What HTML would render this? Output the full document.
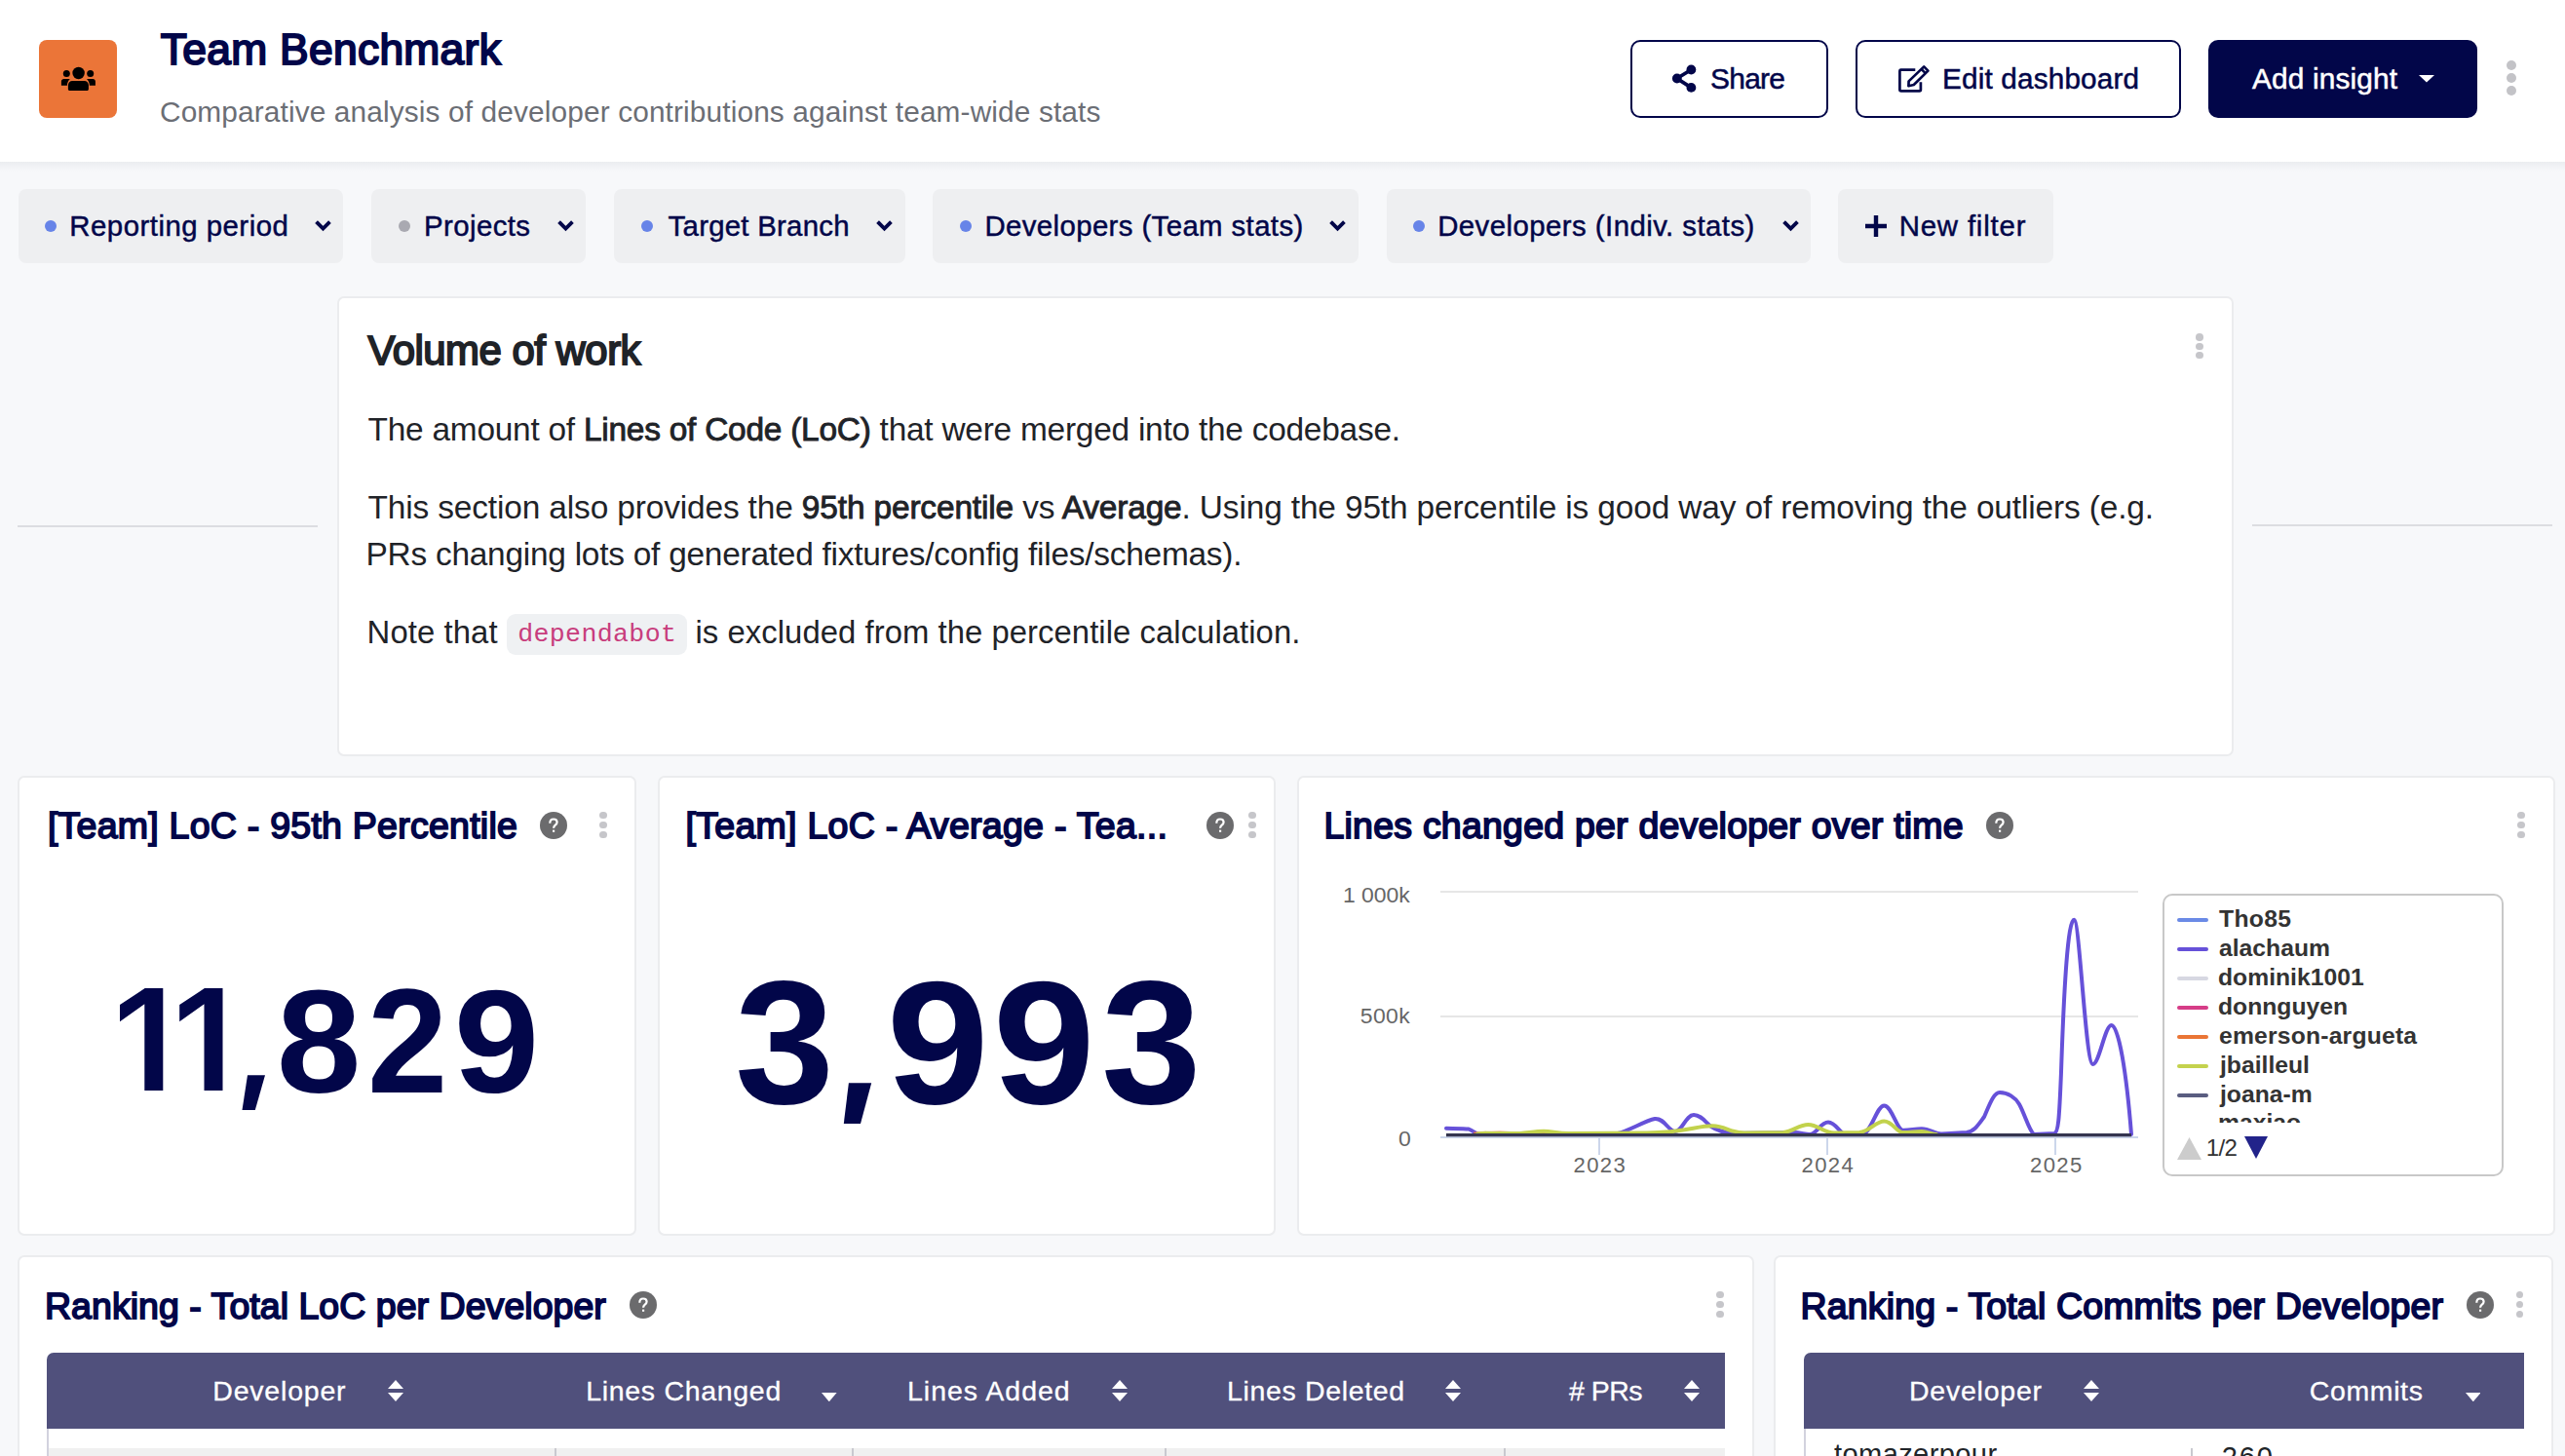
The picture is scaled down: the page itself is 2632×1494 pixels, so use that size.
<!DOCTYPE html>
<html><head><meta charset="utf-8"><title>Team Benchmark</title>
<style>
html,body{margin:0;padding:0;}
body{width:2632px;height:1494px;overflow:hidden;position:relative;background:#f7f8fa;font-family:"Liberation Sans", sans-serif;}
.t{position:absolute;white-space:pre;line-height:normal;}
b{font-weight:bold}
@media (max-width:1500px){html{zoom:0.5}}
</style></head><body>
<div style="position:absolute;left:0px;top:0px;width:2632px;height:166px;background:#fff"></div>
<div style="position:absolute;left:0;top:166px;width:2632px;height:10px;background:linear-gradient(#ebedf0,#f7f8fa)"></div>
<div style="position:absolute;left:40px;top:41px;width:80px;height:80px;background:#eb7538;border-radius:8px"></div>
<svg style="position:absolute;left:60px;top:64px" width="40" height="34" viewBox="0 0 40 34">
<circle cx="20.6" cy="11" r="6.2" fill="#000"/>
<circle cx="8.3" cy="11.5" r="3.5" fill="#000"/>
<circle cx="32.7" cy="11.5" r="3.5" fill="#000"/>
<path d="M9.9 27.4 L9.9 23.5 C9.9 21 11.8 19 14.3 19 L26.5 19 C29 19 30.9 21 30.9 23.5 L30.9 27.4 C30.9 28.3 30.2 28.9 29.4 28.9 L11.4 28.9 C10.6 28.9 9.9 28.3 9.9 27.4 Z" fill="#000"/>
<path d="M2.9 23.7 L2.9 19.5 C2.9 18 4 17 5.5 17 L11.8 17 C10.3 18.6 9 20.5 8.9 23.7 Z" fill="#000"/>
<path d="M37.9 23.7 L37.9 19.5 C37.9 18 36.8 17 35.3 17 L29 17 C30.5 18.6 31.8 20.5 31.9 23.7 Z" fill="#000"/>
</svg>
<div class="t " style="left:164.70px;top:25.87px;font-size:44.33px;font-weight:normal;color:#020649;letter-spacing:0.328px;font-family:'Liberation Sans';-webkit-text-stroke:2px #020649;">Team Benchmark</div>
<div class="t " style="left:164.00px;top:98.03px;font-size:29.80px;font-weight:normal;color:#6b6e75;letter-spacing:0.139px;font-family:'Liberation Sans';">Comparative analysis of developer contributions against team-wide stats</div>
<div style="position:absolute;left:1673px;top:41px;width:203px;height:80px;box-sizing:border-box;border:2.5px solid #020649;border-radius:10px;background:#fff"></div>
<svg style="position:absolute;left:1714px;top:66px" width="30" height="30" viewBox="0 0 30 30">
<path d="M21.4 5.5 L6.8 14.5 L21.4 23.9" stroke="#020649" stroke-width="3.8" fill="none"/>
<circle cx="21.4" cy="5.5" r="4.9" fill="#020649"/><circle cx="6.8" cy="14.5" r="4.9" fill="#020649"/><circle cx="21.4" cy="23.9" r="4.9" fill="#020649"/></svg>
<div class="t " style="left:1755.00px;top:63.89px;font-size:29.94px;font-weight:normal;color:#020649;letter-spacing:-0.734px;font-family:'Liberation Sans';-webkit-text-stroke:0.5px #020649;">Share</div>
<div style="position:absolute;left:1904px;top:41px;width:334px;height:80px;box-sizing:border-box;border:2.5px solid #020649;border-radius:10px;background:#fff"></div>
<svg style="position:absolute;left:1946px;top:65px" width="36" height="32" viewBox="0 0 36 32">
<path d="M19.3 6.7 L4.6 6.7 C3.6 6.7 3.4 7.3 3.4 8.3 L3.4 27 C3.4 28 3.9 28.4 4.9 28.4 L23.6 28.4 C24.6 28.4 24.9 27.9 24.9 27 L24.9 19.3" stroke="#020649" stroke-width="2.7" fill="none"/>
<path d="M28.2 3.4 L32.4 7.6 L17.8 22 L12.4 23.2 L12.6 18.4 Z" stroke="#020649" stroke-width="2.7" fill="none" stroke-linejoin="round"/>
<path d="M25.6 6 L29.8 10.2" stroke="#020649" stroke-width="2.5"/></svg>
<div class="t " style="left:1993.00px;top:64.16px;font-size:29.65px;font-weight:normal;color:#020649;letter-spacing:0.199px;font-family:'Liberation Sans';-webkit-text-stroke:0.5px #020649;">Edit dashboard</div>
<div style="position:absolute;left:2266px;top:41px;width:276px;height:80px;background:#020649;border-radius:10px"></div>
<div class="t " style="left:2311.00px;top:64.03px;font-size:29.80px;font-weight:normal;color:#fff;letter-spacing:0.162px;font-family:'Liberation Sans';-webkit-text-stroke:0.5px #fff;">Add insight</div>
<svg style="position:absolute;left:2482px;top:77.3px" width="16" height="7.6" viewBox="0 0 16 7.6"><path d="M0 0 L16 0 L8.0 7.6 Z" fill="#fff"/></svg>
<div style="position:absolute;left:2571.80px;top:62.00px;width:10.4px;height:10.4px;border-radius:50%;background:#c3c3c7"></div>
<div style="position:absolute;left:2571.80px;top:75.10px;width:10.4px;height:10.4px;border-radius:50%;background:#c3c3c7"></div>
<div style="position:absolute;left:2571.80px;top:88.10px;width:10.4px;height:10.4px;border-radius:50%;background:#c3c3c7"></div>
<div style="position:absolute;left:18.5px;top:194px;width:333.5px;height:76px;background:#eeeff1;border-radius:8px"></div>
<div style="position:absolute;left:46px;top:226px;width:12px;height:12px;border-radius:50%;background:#6784e8"></div>
<div class="t " style="left:71.30px;top:215.42px;font-size:29.36px;font-weight:normal;color:#020649;letter-spacing:0.497px;font-family:'Liberation Sans';-webkit-text-stroke:0.45px #020649;">Reporting period</div>
<svg style="position:absolute;left:324.2px;top:227px;overflow:visible" width="15" height="9.8" viewBox="0 0 15 9.8"><path d="M1.9 1.9 L7.5 7.520000000000001 L13.1 1.9" stroke="#020649" stroke-width="3.8" fill="none" stroke-linecap="square" stroke-linejoin="miter"/></svg>
<div style="position:absolute;left:381.2px;top:194px;width:220.3px;height:76px;background:#eeeff1;border-radius:8px"></div>
<div style="position:absolute;left:409px;top:226px;width:12px;height:12px;border-radius:50%;background:#a9a9b1"></div>
<div class="t " style="left:435.00px;top:215.42px;font-size:29.36px;font-weight:normal;color:#020649;letter-spacing:0.418px;font-family:'Liberation Sans';-webkit-text-stroke:0.45px #020649;">Projects</div>
<svg style="position:absolute;left:573.3px;top:227px;overflow:visible" width="15" height="9.8" viewBox="0 0 15 9.8"><path d="M1.9 1.9 L7.5 7.520000000000001 L13.1 1.9" stroke="#020649" stroke-width="3.8" fill="none" stroke-linecap="square" stroke-linejoin="miter"/></svg>
<div style="position:absolute;left:630px;top:194px;width:298.79999999999995px;height:76px;background:#eeeff1;border-radius:8px"></div>
<div style="position:absolute;left:657.8px;top:226px;width:12px;height:12px;border-radius:50%;background:#6784e8"></div>
<div class="t " style="left:685.60px;top:215.42px;font-size:29.36px;font-weight:normal;color:#020649;letter-spacing:0.262px;font-family:'Liberation Sans';-webkit-text-stroke:0.45px #020649;">Target Branch</div>
<svg style="position:absolute;left:900px;top:227px;overflow:visible" width="15" height="9.8" viewBox="0 0 15 9.8"><path d="M1.9 1.9 L7.5 7.520000000000001 L13.1 1.9" stroke="#020649" stroke-width="3.8" fill="none" stroke-linecap="square" stroke-linejoin="miter"/></svg>
<div style="position:absolute;left:957px;top:194px;width:436.5999999999999px;height:76px;background:#eeeff1;border-radius:8px"></div>
<div style="position:absolute;left:985.1px;top:226px;width:12px;height:12px;border-radius:50%;background:#6784e8"></div>
<div class="t " style="left:1010.40px;top:215.42px;font-size:29.36px;font-weight:normal;color:#020649;letter-spacing:0.396px;font-family:'Liberation Sans';-webkit-text-stroke:0.45px #020649;">Developers (Team stats)</div>
<svg style="position:absolute;left:1365.4px;top:227px;overflow:visible" width="15" height="9.8" viewBox="0 0 15 9.8"><path d="M1.9 1.9 L7.5 7.520000000000001 L13.1 1.9" stroke="#020649" stroke-width="3.8" fill="none" stroke-linecap="square" stroke-linejoin="miter"/></svg>
<div style="position:absolute;left:1422.5px;top:194px;width:435.0px;height:76px;background:#eeeff1;border-radius:8px"></div>
<div style="position:absolute;left:1450.1px;top:226px;width:12px;height:12px;border-radius:50%;background:#6784e8"></div>
<div class="t " style="left:1475.20px;top:215.42px;font-size:29.36px;font-weight:normal;color:#020649;letter-spacing:0.450px;font-family:'Liberation Sans';-webkit-text-stroke:0.45px #020649;">Developers (Indiv. stats)</div>
<svg style="position:absolute;left:1829.5px;top:227px;overflow:visible" width="15" height="9.8" viewBox="0 0 15 9.8"><path d="M1.9 1.9 L7.5 7.520000000000001 L13.1 1.9" stroke="#020649" stroke-width="3.8" fill="none" stroke-linecap="square" stroke-linejoin="miter"/></svg>
<div style="position:absolute;left:1886.2px;top:194px;width:220.60000000000014px;height:76px;background:#eeeff1;border-radius:8px"></div>
<svg style="position:absolute;left:1913.5px;top:221px" width="22" height="22" viewBox="0 0 22 22"><path d="M11 0 V22 M0 11 H22" stroke="#020649" stroke-width="4.4"/></svg>
<div class="t " style="left:1948.70px;top:215.42px;font-size:29.36px;font-weight:normal;color:#020649;letter-spacing:0.825px;font-family:'Liberation Sans';-webkit-text-stroke:0.45px #020649;">New filter</div>
<div style="position:absolute;left:18px;top:539px;width:308px;height:2px;background:#dcdde1"></div>
<div style="position:absolute;left:2311px;top:538px;width:308px;height:2px;background:#dcdde1"></div>
<div style="position:absolute;left:346px;top:304px;width:1946px;height:472px;box-sizing:border-box;background:#fff;border:2px solid #ebecee;border-radius:7px"></div>
<div style="position:absolute;left:2253.20px;top:342.40px;width:7.6px;height:7.6px;border-radius:50%;background:#c6c6ca"></div>
<div style="position:absolute;left:2253.20px;top:351.50px;width:7.6px;height:7.6px;border-radius:50%;background:#c6c6ca"></div>
<div style="position:absolute;left:2253.20px;top:360.60px;width:7.6px;height:7.6px;border-radius:50%;background:#c6c6ca"></div>
<div class="t " style="left:377.50px;top:336.20px;font-size:41.86px;font-weight:normal;color:#1f2328;letter-spacing:-0.472px;font-family:'Liberation Sans';-webkit-text-stroke:1.9px #1f2328;">Volume of work</div>
<div class="t" style="left:377.50px;top:422.04px;font-size:33.43px;color:#1f2328;letter-spacing:-0.238px;">The amount of <span style="-webkit-text-stroke:0.9px #1f2328">Lines of Code (LoC)</span> that were merged into the codebase.</div>
<div class="t" style="left:377.50px;top:501.74px;font-size:33.43px;color:#1f2328;letter-spacing:-0.137px;">This section also provides the <span style="-webkit-text-stroke:0.9px #1f2328">95th percentile</span> vs <span style="-webkit-text-stroke:0.9px #1f2328">Average</span>. Using the 95th percentile is good way of removing the outliers (e.g.</div>
<div class="t" style="left:375.50px;top:549.74px;font-size:33.43px;color:#1f2328;letter-spacing:-0.246px;">PRs changing lots of generated fixtures/config files/schemas).</div>
<div class="t " style="left:376.60px;top:630.46px;font-size:32.85px;font-weight:normal;color:#1f2328;letter-spacing:0.088px;font-family:'Liberation Sans';">Note that</div>
<div style="position:absolute;left:520px;top:630px;width:184.5px;height:41.60000000000002px;background:#eff1f3;border-radius:9px"></div>
<div class="t " style="left:531.20px;top:635.92px;font-size:26.60px;font-weight:normal;color:#c83d7d;letter-spacing:0.352px;font-family:'Liberation Mono';">dependabot</div>
<div class="t " style="left:713.50px;top:630.46px;font-size:32.85px;font-weight:normal;color:#1f2328;letter-spacing:0.052px;font-family:'Liberation Sans';">is excluded from the percentile calculation.</div>
<div style="position:absolute;left:18px;top:796px;width:635px;height:471.5px;box-sizing:border-box;background:#fff;border:2px solid #ebecee;border-radius:7px"></div>
<div style="position:absolute;left:675px;top:796px;width:633.5px;height:471.5px;box-sizing:border-box;background:#fff;border:2px solid #ebecee;border-radius:7px"></div>
<div style="position:absolute;left:1331px;top:796px;width:1291px;height:471.5px;box-sizing:border-box;background:#fff;border:2px solid #ebecee;border-radius:7px"></div>
<div class="t " style="left:48.90px;top:825.75px;font-size:37.50px;font-weight:normal;color:#020649;letter-spacing:0.249px;font-family:'Liberation Sans';-webkit-text-stroke:1.8px #020649;">[Team] LoC - 95th Percentile</div>
<svg style="position:absolute;left:553.90px;top:832.70px" width="28" height="28" viewBox="0 0 28 28"><circle cx="14" cy="14" r="14" fill="#6b6b6d"/><g transform="translate(14 14) scale(0.84) translate(-14 -14)"><path d="M9.6 11.2 C9.6 8.1 11.6 6.3 14 6.3 C16.5 6.3 18.3 7.9 18.3 10.1 C18.3 12 17 13 15.8 13.9 C14.6 14.9 14.1 15.5 14.1 17.4" stroke="#fff" stroke-width="2.6" fill="none"/><rect x="12.8" y="19.5" width="2.6" height="2.6" fill="#fff"/></g></svg>
<div style="position:absolute;left:615.30px;top:833.10px;width:7.4px;height:7.4px;border-radius:50%;background:#c6c6ca"></div>
<div style="position:absolute;left:615.30px;top:843.00px;width:7.4px;height:7.4px;border-radius:50%;background:#c6c6ca"></div>
<div style="position:absolute;left:615.30px;top:852.80px;width:7.4px;height:7.4px;border-radius:50%;background:#c6c6ca"></div>
<div class="t " style="left:703.50px;top:825.75px;font-size:37.50px;font-weight:normal;color:#020649;letter-spacing:0.286px;font-family:'Liberation Sans';-webkit-text-stroke:1.8px #020649;">[Team] LoC - Average - Tea...</div>
<svg style="position:absolute;left:1237.70px;top:832.70px" width="28" height="28" viewBox="0 0 28 28"><circle cx="14" cy="14" r="14" fill="#6b6b6d"/><g transform="translate(14 14) scale(0.84) translate(-14 -14)"><path d="M9.6 11.2 C9.6 8.1 11.6 6.3 14 6.3 C16.5 6.3 18.3 7.9 18.3 10.1 C18.3 12 17 13 15.8 13.9 C14.6 14.9 14.1 15.5 14.1 17.4" stroke="#fff" stroke-width="2.6" fill="none"/><rect x="12.8" y="19.5" width="2.6" height="2.6" fill="#fff"/></g></svg>
<div style="position:absolute;left:1281.30px;top:833.10px;width:7.4px;height:7.4px;border-radius:50%;background:#c6c6ca"></div>
<div style="position:absolute;left:1281.30px;top:843.00px;width:7.4px;height:7.4px;border-radius:50%;background:#c6c6ca"></div>
<div style="position:absolute;left:1281.30px;top:852.80px;width:7.4px;height:7.4px;border-radius:50%;background:#c6c6ca"></div>
<div class="t " style="left:1358.50px;top:825.75px;font-size:37.50px;font-weight:normal;color:#020649;letter-spacing:0.218px;font-family:'Liberation Sans';-webkit-text-stroke:1.8px #020649;">Lines changed per developer over time</div>
<svg style="position:absolute;left:2038.00px;top:833.00px" width="28" height="28" viewBox="0 0 28 28"><circle cx="14" cy="14" r="14" fill="#6b6b6d"/><g transform="translate(14 14) scale(0.84) translate(-14 -14)"><path d="M9.6 11.2 C9.6 8.1 11.6 6.3 14 6.3 C16.5 6.3 18.3 7.9 18.3 10.1 C18.3 12 17 13 15.8 13.9 C14.6 14.9 14.1 15.5 14.1 17.4" stroke="#fff" stroke-width="2.6" fill="none"/><rect x="12.8" y="19.5" width="2.6" height="2.6" fill="#fff"/></g></svg>
<div style="position:absolute;left:2583.30px;top:833.10px;width:7.4px;height:7.4px;border-radius:50%;background:#c6c6ca"></div>
<div style="position:absolute;left:2583.30px;top:843.00px;width:7.4px;height:7.4px;border-radius:50%;background:#c6c6ca"></div>
<div style="position:absolute;left:2583.30px;top:852.80px;width:7.4px;height:7.4px;border-radius:50%;background:#c6c6ca"></div>
<svg style="position:absolute;left:0;top:0;overflow:visible" width="1" height="1"><path d="M123.00 1031.10 L148.70 1014.10 L167.30 1014.10 L167.30 1119.00 L148.30 1119.00 L148.30 1030.30 L123.00 1048.20 Z" fill="#020649"/></svg>
<svg style="position:absolute;left:0;top:0;overflow:visible" width="1" height="1"><path d="M184.20 1031.10 L209.90 1014.10 L228.50 1014.10 L228.50 1119.00 L209.50 1119.00 L209.50 1030.30 L184.20 1048.20 Z" fill="#020649"/></svg>
<svg style="position:absolute;left:0;top:0;overflow:visible" width="1" height="1"><path d="M248.50 1138.90 L254.00 1103.20 L272.00 1103.20 L261.80 1138.90 Z" fill="#020649"/></svg>
<div style="position:absolute;left:288.1px;top:1012.7px;width:0;height:0;transform-origin:0 0;transform:scale(1.0400,1.0028)"><div class="t" style="left:-4.0000px;top:-29.7910px;font-size:150px;font-weight:bold;color:#020649">8</div></div>
<div style="position:absolute;left:381.7px;top:1012.7px;width:0;height:0;transform-origin:0 0;transform:scale(0.9877,1.0124)"><div class="t" style="left:-5.0000px;top:-30.7910px;font-size:150px;font-weight:bold;color:#020649">2</div></div>
<div style="position:absolute;left:470.8px;top:1012.7px;width:0;height:0;transform-origin:0 0;transform:scale(1.0493,1.0028)"><div class="t" style="left:-5.0000px;top:-29.7910px;font-size:150px;font-weight:bold;color:#020649">9</div></div>
<div style="position:absolute;left:757.8px;top:1003.4px;width:0;height:0;transform-origin:0 0;transform:scale(1.0200,1.0031)"><div class="t" style="left:-4.0000px;top:-36.9492px;font-size:180px;font-weight:bold;color:#020649">3</div></div>
<svg style="position:absolute;left:0;top:0;overflow:visible" width="1" height="1"><path d="M865.80 1152.90 L870.90 1111.30 L894.20 1111.30 L883.00 1152.90 Z" fill="#020649"/></svg>
<div style="position:absolute;left:915.5px;top:1003.4px;width:0;height:0;transform-origin:0 0;transform:scale(1.0477,1.0031)"><div class="t" style="left:-6.0000px;top:-36.9492px;font-size:180px;font-weight:bold;color:#020649">9</div></div>
<div style="position:absolute;left:1025px;top:1003.4px;width:0;height:0;transform-origin:0 0;transform:scale(1.0477,1.0031)"><div class="t" style="left:-6.0000px;top:-36.9492px;font-size:180px;font-weight:bold;color:#020649">9</div></div>
<div style="position:absolute;left:1134.4px;top:1003.4px;width:0;height:0;transform-origin:0 0;transform:scale(1.0256,1.0031)"><div class="t" style="left:-4.0000px;top:-36.9492px;font-size:180px;font-weight:bold;color:#020649">3</div></div>
<div style="position:absolute;left:1478px;top:913.5px;width:716px;height:2.0px;background:#e6e6e6"></div>
<div style="position:absolute;left:1478px;top:1041.5px;width:716px;height:2.0px;background:#e6e6e6"></div>
<div style="position:absolute;left:1478px;top:1165.8px;width:716px;height:2.0px;background:#ccd6eb"></div>
<div style="position:absolute;left:1640px;top:1167px;width:2px;height:18px;background:#ccd6eb"></div>
<div style="position:absolute;left:1874px;top:1167px;width:2px;height:18px;background:#ccd6eb"></div>
<div style="position:absolute;left:2108px;top:1167px;width:2px;height:18px;background:#ccd6eb"></div>
<div class="t " style="left:1378.00px;top:905.41px;font-size:22.97px;font-weight:normal;color:#666666;letter-spacing:-0.048px;font-family:'Liberation Sans';">1 000k</div>
<div class="t " style="left:1395.80px;top:1028.91px;font-size:22.97px;font-weight:normal;color:#666666;letter-spacing:0.368px;font-family:'Liberation Sans';">500k</div>
<div class="t " style="left:1435.00px;top:1154.61px;font-size:22.97px;font-weight:normal;color:#666666;letter-spacing:0.000px;font-family:'Liberation Sans';">0</div>
<div class="t " style="left:1614.50px;top:1183.40px;font-size:22.09px;font-weight:normal;color:#666666;letter-spacing:1.388px;font-family:'Liberation Sans';">2023</div>
<div class="t " style="left:1848.50px;top:1183.40px;font-size:22.09px;font-weight:normal;color:#666666;letter-spacing:1.388px;font-family:'Liberation Sans';">2024</div>
<div class="t " style="left:2083.00px;top:1183.40px;font-size:22.09px;font-weight:normal;color:#666666;letter-spacing:1.388px;font-family:'Liberation Sans';">2025</div>
<svg style="position:absolute;left:0;top:0;overflow:visible" width="2632" height="1494">
<path d="M1484 1157.8 C1495 1158 1503 1158 1507 1158.5 C1511 1160 1514 1163 1518 1164 L1660 1163 C1672 1160 1688 1150 1698 1148 C1708 1147 1712 1161 1719 1161 C1726 1161 1730 1144 1738 1144 C1746 1144 1750 1152 1756 1156 C1762 1160 1768 1162 1778 1163 L1840 1162 C1848 1162 1852 1164 1857 1164 C1864 1164 1868 1151.5 1876 1151.5 C1884 1151.5 1888 1164 1894 1164 L1912 1163 C1920 1162 1926 1134.4 1933.3 1134.4 C1941 1134.4 1946 1158 1952 1159.6 C1958 1160 1966 1158 1972 1158.2 C1980 1158.5 1986 1163.5 1992 1163.5 L2018 1162 C2026 1161 2030 1154 2036 1146 C2042 1132 2046 1121 2052 1121 C2060 1121 2068 1126 2072 1133 C2078 1144 2082 1160 2087 1164 L2108 1163 C2112 1162 2113 1150 2115 1100 C2118 1010 2122 943.7 2128.2 943.7 C2134 943.7 2140 1092 2147.6 1092 C2154 1092 2160 1052 2166.5 1052 C2174 1052 2182 1100 2187 1164" stroke="#6651d9" stroke-width="4" fill="none" stroke-linejoin="round" stroke-linecap="round"/>
<path d="M1512 1163 C1530 1162 1540 1161.5 1550 1162.5 L1600 1162.5 C1620 1163 1640 1162 1660 1162.5" stroke="#e8763a" stroke-width="3" fill="none" opacity="0.8"/>
<path d="M1516 1163.5 C1520 1163 1524 1162 1530 1163 L1560 1163 C1570 1162 1577 1160.7 1584 1160.7 C1592 1160.7 1598 1163 1610 1163 L1690 1162.5 C1730 1162 1740 1155.3 1757.4 1155.3 C1770 1155.3 1776 1162.5 1790 1162.5 L1830 1162 C1840 1161 1846 1154 1855.4 1154 C1865 1154 1872 1162.5 1882 1162.5 L1908 1162 C1918 1161 1925 1150.5 1933.3 1150.5 C1942 1150.5 1946 1162 1952.3 1162 C1960 1162 1966 1161 1972 1161 C1978 1161 1982 1164 1987 1164" stroke="#c2d24c" stroke-width="4" fill="none" stroke-linejoin="round" stroke-linecap="round"/>
<path d="M1484 1164.6 L2187 1164.6" stroke="#34354f" stroke-width="3.2" fill="none"/>
</svg>
<div style="position:absolute;left:2218.7px;top:916.5px;width:350.5px;height:290.0999999999999px;box-sizing:border-box;border:2px solid #c8c8c8;border-radius:10px;background:#fff"></div>
<div style="position:absolute;left:2234px;top:942px;width:32px;height:4px;background:#6a8ae6;border-radius:2px"></div>
<div class="t " style="left:2277.00px;top:929.23px;font-size:24.71px;font-weight:bold;color:#333333;letter-spacing:0.307px;font-family:'Liberation Sans';">Tho85</div>
<div style="position:absolute;left:2234px;top:972px;width:32px;height:4px;background:#6651d9;border-radius:2px"></div>
<div class="t " style="left:2277.00px;top:959.23px;font-size:24.71px;font-weight:bold;color:#333333;letter-spacing:0.000px;font-family:'Liberation Sans';">alachaum</div>
<div style="position:absolute;left:2234px;top:1002px;width:32px;height:4px;background:#d7d8e2;border-radius:2px"></div>
<div class="t " style="left:2276.00px;top:989.23px;font-size:24.71px;font-weight:bold;color:#333333;letter-spacing:0.000px;font-family:'Liberation Sans';">dominik1001</div>
<div style="position:absolute;left:2234px;top:1031.7px;width:32px;height:4.0px;background:#d63d87;border-radius:2px"></div>
<div class="t " style="left:2276.00px;top:1018.93px;font-size:24.71px;font-weight:bold;color:#333333;letter-spacing:0.000px;font-family:'Liberation Sans';">donnguyen</div>
<div style="position:absolute;left:2234px;top:1061.8px;width:32px;height:4.0px;background:#ea7535;border-radius:2px"></div>
<div class="t " style="left:2277.00px;top:1049.03px;font-size:24.71px;font-weight:bold;color:#333333;letter-spacing:0.187px;font-family:'Liberation Sans';">emerson-argueta</div>
<div style="position:absolute;left:2234px;top:1091.6px;width:32px;height:4.0px;background:#c4d24e;border-radius:2px"></div>
<div class="t " style="left:2278.00px;top:1078.83px;font-size:24.71px;font-weight:bold;color:#333333;letter-spacing:0.000px;font-family:'Liberation Sans';">jbailleul</div>
<div style="position:absolute;left:2234px;top:1121.7px;width:32px;height:4.0px;background:#5a5d80;border-radius:2px"></div>
<div class="t " style="left:2278.00px;top:1108.93px;font-size:24.71px;font-weight:bold;color:#333333;letter-spacing:0.000px;font-family:'Liberation Sans';">joana-m</div>
<div style="position:absolute;left:2230px;top:1130px;width:300px;height:21.6px;overflow:hidden">
<div class="t " style="left:46.00px;top:8.13px;font-size:24.71px;font-weight:bold;color:#333333;letter-spacing:0.000px;font-family:'Liberation Sans';">maxiao</div>
</div>
<svg style="position:absolute;left:2234px;top:1166.5px" width="25" height="23" viewBox="0 0 25 23"><path d="M12.5 0 L25 23 L0 23 Z" fill="#cccccc"/></svg>
<div class="t " style="left:2263.80px;top:1163.86px;font-size:24.13px;font-weight:normal;color:#333333;letter-spacing:-0.653px;font-family:'Liberation Sans';">1/2</div>
<svg style="position:absolute;left:2303px;top:1166px" width="24" height="23" viewBox="0 0 24 23"><path d="M0 0 L24 0 L12 23 Z" fill="#22238a"/></svg>
<div style="position:absolute;left:18px;top:1288px;width:1781.5px;height:226px;box-sizing:border-box;background:#fff;border:2px solid #ebecee;border-radius:7px"></div>
<div style="position:absolute;left:1820px;top:1288px;width:800px;height:226px;box-sizing:border-box;background:#fff;border:2px solid #ebecee;border-radius:7px"></div>
<div class="t " style="left:46.00px;top:1318.65px;font-size:37.50px;font-weight:normal;color:#020649;letter-spacing:0.037px;font-family:'Liberation Sans';-webkit-text-stroke:1.8px #020649;">Ranking - Total LoC per Developer</div>
<svg style="position:absolute;left:645.80px;top:1324.70px" width="28" height="28" viewBox="0 0 28 28"><circle cx="14" cy="14" r="14" fill="#6b6b6d"/><g transform="translate(14 14) scale(0.84) translate(-14 -14)"><path d="M9.6 11.2 C9.6 8.1 11.6 6.3 14 6.3 C16.5 6.3 18.3 7.9 18.3 10.1 C18.3 12 17 13 15.8 13.9 C14.6 14.9 14.1 15.5 14.1 17.4" stroke="#fff" stroke-width="2.6" fill="none"/><rect x="12.8" y="19.5" width="2.6" height="2.6" fill="#fff"/></g></svg>
<div style="position:absolute;left:1761.30px;top:1324.80px;width:7.4px;height:7.4px;border-radius:50%;background:#c6c6ca"></div>
<div style="position:absolute;left:1761.30px;top:1334.80px;width:7.4px;height:7.4px;border-radius:50%;background:#c6c6ca"></div>
<div style="position:absolute;left:1761.30px;top:1344.80px;width:7.4px;height:7.4px;border-radius:50%;background:#c6c6ca"></div>
<div class="t " style="left:1847.60px;top:1318.65px;font-size:37.50px;font-weight:normal;color:#020649;letter-spacing:0.155px;font-family:'Liberation Sans';-webkit-text-stroke:1.8px #020649;">Ranking - Total Commits per Developer</div>
<svg style="position:absolute;left:2530.70px;top:1324.70px" width="28" height="28" viewBox="0 0 28 28"><circle cx="14" cy="14" r="14" fill="#6b6b6d"/><g transform="translate(14 14) scale(0.84) translate(-14 -14)"><path d="M9.6 11.2 C9.6 8.1 11.6 6.3 14 6.3 C16.5 6.3 18.3 7.9 18.3 10.1 C18.3 12 17 13 15.8 13.9 C14.6 14.9 14.1 15.5 14.1 17.4" stroke="#fff" stroke-width="2.6" fill="none"/><rect x="12.8" y="19.5" width="2.6" height="2.6" fill="#fff"/></g></svg>
<div style="position:absolute;left:2581.50px;top:1324.80px;width:7.4px;height:7.4px;border-radius:50%;background:#c6c6ca"></div>
<div style="position:absolute;left:2581.50px;top:1334.80px;width:7.4px;height:7.4px;border-radius:50%;background:#c6c6ca"></div>
<div style="position:absolute;left:2581.50px;top:1344.80px;width:7.4px;height:7.4px;border-radius:50%;background:#c6c6ca"></div>
<div style="position:absolute;left:48px;top:1388px;width:1722px;height:77.59999999999991px;background:#50507c;border-radius:7px 0 0 0"></div>
<div style="position:absolute;left:48px;top:1465.6px;width:2px;height:28.40000000000009px;background:#d2d2de"></div>
<div style="position:absolute;left:50px;top:1486px;width:1720px;height:8px;background:#f0f0f0"></div>
<div style="position:absolute;left:569px;top:1486px;width:2px;height:8px;background:#c9c9cf"></div>
<div style="position:absolute;left:874px;top:1486px;width:2px;height:8px;background:#c9c9cf"></div>
<div style="position:absolute;left:1194.6px;top:1486px;width:2.0px;height:8px;background:#c9c9cf"></div>
<div style="position:absolute;left:1543px;top:1486px;width:2px;height:8px;background:#c9c9cf"></div>
<div class="t " style="left:218.30px;top:1411.01px;font-size:28.49px;font-weight:normal;color:#ffffff;letter-spacing:0.802px;font-family:'Liberation Sans';-webkit-text-stroke:0.3px #ffffff;">Developer</div>
<svg style="position:absolute;left:397.8px;top:1416.3px" width="16" height="22" viewBox="0 0 16 22"><path d="M8 0 L16 9 L0 9 Z M0 13 L16 13 L8 22 Z" fill="#fff"/></svg>
<div class="t " style="left:601.20px;top:1411.01px;font-size:28.49px;font-weight:normal;color:#ffffff;letter-spacing:0.701px;font-family:'Liberation Sans';-webkit-text-stroke:0.3px #ffffff;">Lines Changed</div>
<svg style="position:absolute;left:843px;top:1428.6px" width="15.6" height="9.3" viewBox="0 0 15.6 9.3"><path d="M0 0 L15.6 0 L7.8 9.3 Z" fill="#fff"/></svg>
<div class="t " style="left:931.00px;top:1411.01px;font-size:28.49px;font-weight:normal;color:#ffffff;letter-spacing:0.985px;font-family:'Liberation Sans';-webkit-text-stroke:0.3px #ffffff;">Lines Added</div>
<svg style="position:absolute;left:1140.7px;top:1416.3px" width="16" height="22" viewBox="0 0 16 22"><path d="M8 0 L16 9 L0 9 Z M0 13 L16 13 L8 22 Z" fill="#fff"/></svg>
<div class="t " style="left:1259.00px;top:1411.01px;font-size:28.49px;font-weight:normal;color:#ffffff;letter-spacing:0.662px;font-family:'Liberation Sans';-webkit-text-stroke:0.3px #ffffff;">Lines Deleted</div>
<svg style="position:absolute;left:1482.6px;top:1416.3px" width="16" height="22" viewBox="0 0 16 22"><path d="M8 0 L16 9 L0 9 Z M0 13 L16 13 L8 22 Z" fill="#fff"/></svg>
<div class="t " style="left:1610.00px;top:1411.01px;font-size:28.49px;font-weight:normal;color:#ffffff;letter-spacing:-0.498px;font-family:'Liberation Sans';-webkit-text-stroke:0.3px #ffffff;"># PRs</div>
<svg style="position:absolute;left:1728.2px;top:1416.3px" width="16" height="22" viewBox="0 0 16 22"><path d="M8 0 L16 9 L0 9 Z M0 13 L16 13 L8 22 Z" fill="#fff"/></svg>
<div style="position:absolute;left:1850.5px;top:1388px;width:739.5px;height:77.59999999999991px;background:#50507c;border-radius:7px 0 0 0"></div>
<div style="position:absolute;left:1850.5px;top:1465.6px;width:2.0px;height:28.40000000000009px;background:#d2d2de"></div>
<div class="t " style="left:1959.00px;top:1411.01px;font-size:28.49px;font-weight:normal;color:#ffffff;letter-spacing:0.777px;font-family:'Liberation Sans';-webkit-text-stroke:0.3px #ffffff;">Developer</div>
<svg style="position:absolute;left:2138.4px;top:1416.3px" width="16" height="22" viewBox="0 0 16 22"><path d="M8 0 L16 9 L0 9 Z M0 13 L16 13 L8 22 Z" fill="#fff"/></svg>
<div class="t " style="left:2369.80px;top:1411.01px;font-size:28.49px;font-weight:normal;color:#ffffff;letter-spacing:0.624px;font-family:'Liberation Sans';-webkit-text-stroke:0.3px #ffffff;">Commits</div>
<svg style="position:absolute;left:2529.7px;top:1428.6px" width="15.6" height="9.3" viewBox="0 0 15.6 9.3"><path d="M0 0 L15.6 0 L7.8 9.3 Z" fill="#fff"/></svg>
<div style="position:absolute;left:2248px;top:1486px;width:2px;height:8px;background:#c9c9cf"></div>
<div class="t " style="left:1882.00px;top:1476.18px;font-size:29.07px;font-weight:normal;color:#212529;letter-spacing:0.393px;font-family:'Liberation Sans';">tomazerpour</div>
<div class="t " style="left:2279.80px;top:1479.18px;font-size:29.07px;font-weight:normal;color:#212529;letter-spacing:1.787px;font-family:'Liberation Sans';">260</div>
</body></html>
